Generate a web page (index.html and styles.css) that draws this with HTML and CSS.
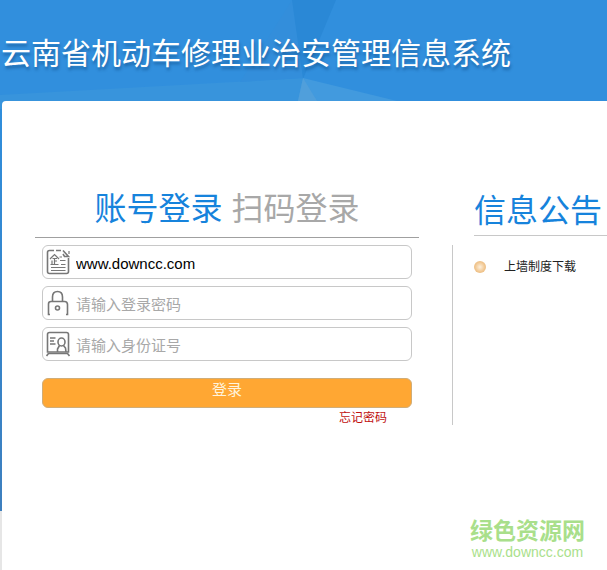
FILE: index.html
```html
<!DOCTYPE html>
<html lang="zh-CN">
<head>
  <meta charset="UTF-8">
  <title>云南省机动车修理业治安管理信息系统</title>
  <link rel="stylesheet" href="styles.css">
</head>
<body>

  <header class="header">
    <svg class="header-bg" viewBox="0 0 607 101" preserveAspectRatio="none" aria-hidden="true">
      <path d="M0 95L303 78L300 101H0Z" fill="#3894dc"/>
      <path d="M292 0L240 82L303 78V0Z" fill="#338edb"/>
      <path d="M292 0H336L303 79Z" fill="#2a88d6"/>
      <path d="M303 78L397 101H298Z" fill="#429ade"/>
      <path d="M303 78L317 101H298Z" fill="#509fdb"/>
    </svg>
    <h1 class="title">云南省机动车修理业治安管理信息系统</h1>
  </header>

  <main class="main">
    <div class="card">
      <section class="login">
        <div class="tabs">
          <button type="button" class="tab active">账号登录</button>
          <button type="button" class="tab">扫码登录</button>
        </div>

        <form class="form">
          <div class="field">
            <svg class="icon" viewBox="0 0 24 26" aria-hidden="true">
              <path d="M8 1.500H3.500Q1.500 1.500 1.500 3.500V22.500Q1.500 24.500 3.500 24.500H20.500Q22.500 24.500 22.500 22.500V9M10 1.500H15M17 1.500L22.500 7.500H18.500L17 5"/>
              <path d="M23 2V5M4 10L8.500 5.500L13 10M6.500 9.500H11M8.500 9.500V15M8.500 12H11M6 11.500V15M4.500 15.500H12.500M13.500 8H16M14 11.500H19.500M15 15.500H19.500M5 18.500H19.500M5 21.500H19.500" stroke-width="1.200"/>
            </svg>
            <input type="text" class="input" aria-label="账号" value="www.downcc.com">
          </div>
          <div class="field">
            <svg class="icon" viewBox="0 0 24 26" aria-hidden="true">
              <path d="M6.500 11V7Q6.500 1.500 11.500 1.500T16.500 7V11M4 24.500H2.500V14Q2.500 11.500 5 11.500H18.500Q21.500 11.500 21.500 14.500V24.500H20"/>
              <circle cx="11.500" cy="18" r="2"/>
            </svg>
            <input type="password" class="input" aria-label="密码" placeholder="请输入登录密码">
          </div>
          <div class="field">
            <svg class="icon" viewBox="0 0 24 26" aria-hidden="true">
              <path d="M3.500 1.500H20.500Q22.500 1.500 22.500 3.500V21H1.500V3.500Q1.500 1.500 3.500 1.500ZM4 7H9.500M4 10H8M4 13H9.500"/>
              <ellipse cx="15.500" cy="11" rx="3.500" ry="4"/>
              <path d="M13.500 14.500L11.500 18V21M17.500 14.500L19.500 17L20 21M2.500 22.500H21.500L23.500 25M2.500 22.500L.5 25"/>
            </svg>
            <input type="text" class="input" aria-label="身份证号" placeholder="请输入身份证号">
          </div>
          <button type="submit" class="submit">登录</button>
          <a href="#" class="forgot">忘记密码</a>
        </form>
      </section>

      <section class="notice">
        <h2 class="notice-title">信息公告</h2>
        <ul class="notice-list">
          <li><a href="#">上墙制度下载</a></li>
        </ul>
      </section>
    </div>
  </main>

  <div class="watermark">
    <strong>绿色资源网</strong>
    <span>www.downcc.com</span>
  </div>

</body>
</html>
```
FILE: styles.css
```css
* {
  box-sizing: border-box;
}

body {
  margin: 0;
  min-height: 100vh;
  display: flex;
  flex-direction: column;
  position: relative;
  overflow-x: hidden;
  font-family: "Liberation Sans", "Noto Sans CJK SC", sans-serif;
  background: linear-gradient(#2f8edc 0, #2f8edc 101px, #3d7fbe 511px, #e6e6e6 511px);
}

.header {
  position: relative;
  height: 101px;
  padding-top: 34px;
  background: #318fdd;
}

.header-bg {
  position: absolute;
  top: 0;
  left: 0;
  width: 100%;
  height: 100%;
}

.title {
  position: relative;
  margin: 0;
  padding-left: 1px;
  font-size: 30px;
  line-height: 40px;
  font-weight: normal;
  white-space: nowrap;
  color: #fff;
  text-shadow: 1px 3px 3px rgba(0, 50, 100, 0.4);
}

/* the card hides the page background except for a thin strip on the left */
.main {
  flex: 1;
  display: flex;
  padding-left: 2px;
  background: linear-gradient(#3894dc, #3894dc) top / 100% 8px no-repeat;
}

.card {
  flex: 1;
  display: flex;
  min-width: 0;
  padding: 84px 0 0 33px;
  background: #fff;
  border-top-left-radius: 4px;
}

.login {
  flex: 0 1 384px;
}

.tabs {
  display: flex;
  justify-content: center;
  gap: 9px;
  padding-bottom: 4px;
  border-bottom: 1px solid #a0a0a0;
}

.tab {
  padding: 0;
  border: none;
  background: none;
  font-family: inherit;
  font-size: 32px;
  line-height: 48px;
  color: #a8a8a8;
  cursor: pointer;
}

.tab.active {
  color: #1683dc;
}

.form {
  display: flex;
  flex-direction: column;
  gap: 7px;
  padding: 7px 7px 0;
}

.field {
  display: flex;
  align-items: center;
  height: 34px;
  padding-left: 3px;
  border: 1px solid #c8c8c8;
  border-radius: 6px;
}

.icon {
  flex: none;
  width: 24px;
  height: 26px;
  fill: none;
  stroke: #777;
  stroke-width: 1.6;
}

.input {
  flex: 1;
  min-width: 0;
  padding: 2px 6px 0;
  border: none;
  outline: none;
  background: none;
  font-family: inherit;
  font-size: 15px;
  color: #000;
}

.input::placeholder {
  color: #a8a8a8;
}

.submit {
  height: 30px;
  margin-top: 10px;
  padding: 0 0 7px;
  border: 1px solid #d0ad78;
  border-radius: 6px;
  background: #ffa733;
  font-family: inherit;
  font-size: 15px;
  line-height: 20px;
  color: #fff3dc;
  cursor: pointer;
}

.forgot {
  align-self: flex-end;
  margin-top: -6px;
  padding-right: 25px;
  font-size: 12px;
  line-height: 18px;
  color: #c01010;
  text-decoration: none;
}

.notice {
  flex: 1;
  min-width: 0;
  margin-left: 33px;
}

.notice-title {
  margin: 0 0 9px 22px;
  padding-top: 2px;
  border-bottom: 1px solid #c8c8c8;
  font-size: 32px;
  line-height: 48px;
  font-weight: normal;
  white-space: nowrap;
  color: #1683dc;
}

.notice-list {
  min-height: 180px;
  margin: 0;
  padding: 12px 0 0 21px;
  border-left: 1px solid #c8c8c8;
  list-style: none;
}

.notice-list li {
  display: flex;
  align-items: center;
  gap: 18px;
  font-size: 12px;
  line-height: 20px;
}

.notice-list li::before {
  content: "";
  width: 12px;
  height: 12px;
  border-radius: 50%;
  background: radial-gradient(#fdf0dd, #f0c48c 60%, #e3b377);
}

.notice-list a {
  color: #222;
  text-decoration: none;
}

.watermark {
  position: absolute;
  right: 22px;
  bottom: 10px;
  display: flex;
  flex-direction: column;
  align-items: center;
  color: #a9df8b;
}

.watermark strong {
  font-size: 23px;
  line-height: 26px;
}

.watermark span {
  font-size: 14px;
  line-height: 16px;
}
```
